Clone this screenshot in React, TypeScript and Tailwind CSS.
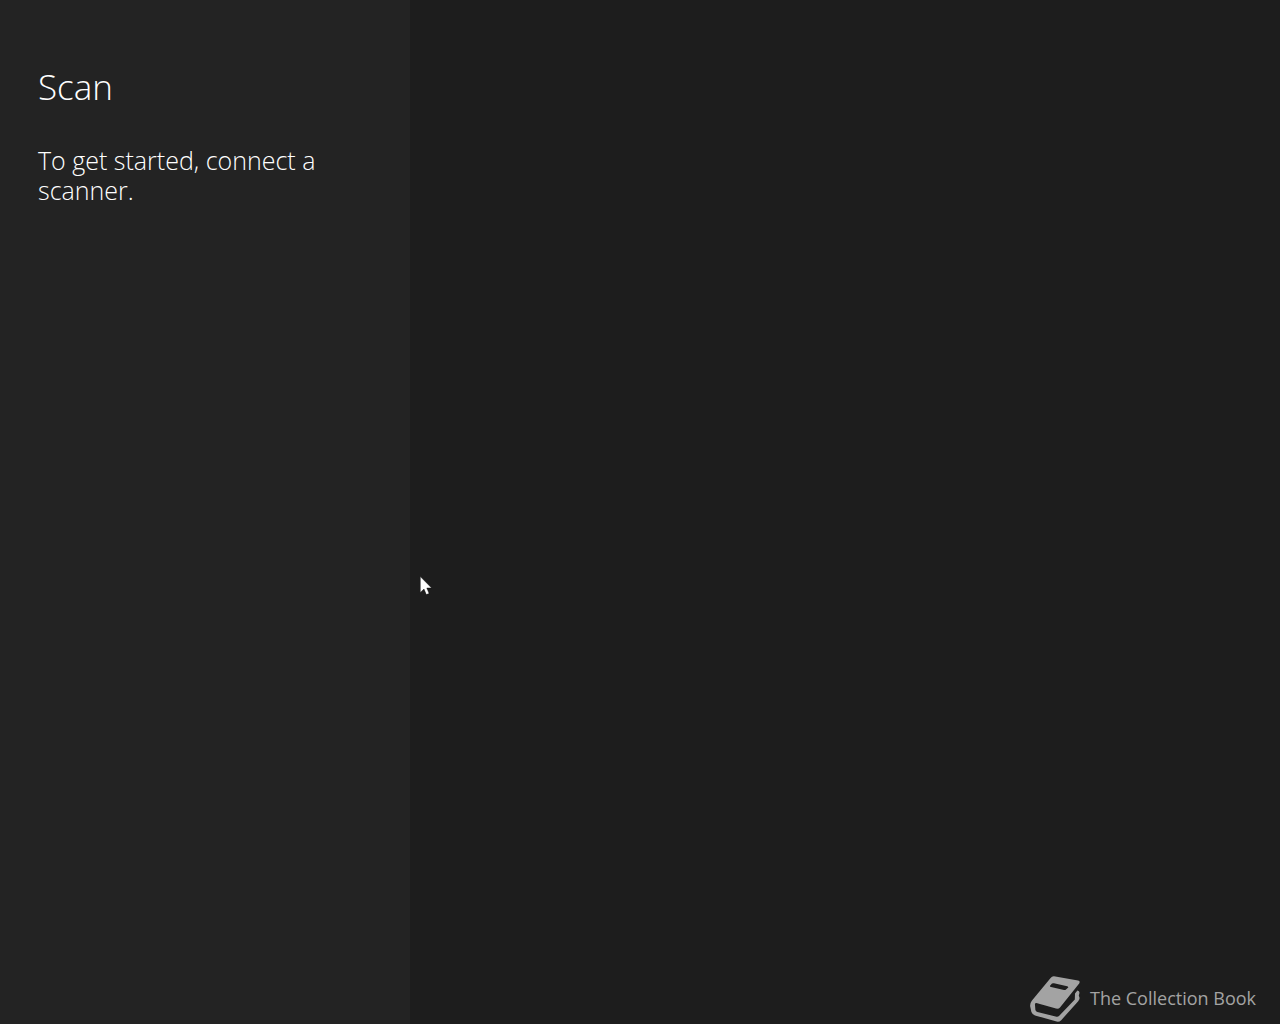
function BookIcon() {
  return (
    <svg viewBox="0 0 70 60" className="h-15 w-[70px]" aria-hidden="true">
      {/* cover, spine and back cover */}
      <path
        fill="#a3a3a3"
        fillRule="evenodd"
        d="M34 12.2 58 16.6Q60.6 17.2 59.2 19.4L40 43.4Q38.6 45.2 36 44.6L16.4 39Q14.6 39 15 41L15.4 46Q15.8 47.6 17.4 48L36.6 52.8Q38 53 39 52L54.8 35.4 55 29.6 57.4 26.4Q59.8 27 59.4 29.2L58.8 31.4 59.6 34Q59.6 35.6 58.2 37.2L41.2 56.2Q39.2 58.2 36.6 57.6L15 51.4Q12.2 50.4 11.4 48L10.2 42.6Q9.8 39.4 11.8 36.8L30.6 14Q32 12 34 12.2ZM32 19.6 30 21.8Q29.8 22.8 31 23.1L44 26Q45.2 26.2 46 25.4L48.2 23.6Q48.6 22.6 47.2 22.2L34 19.3Q32.8 19 32 19.6Z"
      />
    </svg>
  );
}

function Cursor() {
  return (
    <svg
      viewBox="0 0 12 19"
      className="pointer-events-none absolute top-[576px] left-[420px] h-[19px] w-3"
      aria-hidden="true"
    >
      <path
        fill="#ffffff"
        stroke="#000000"
        strokeWidth="0.4"
        d="M0.3 0.6V16.4L4 13.1 6.3 18.6 9.1 17.5 6.8 12H11.6Z"
      />
    </svg>
  );
}

export default function App() {
  return (
    <div className="relative flex min-h-screen bg-[#1d1d1d] font-['Open_Sans','Noto_Sans',sans-serif]">
      <aside className="w-[32%] bg-[#232323] px-[38px] pt-[63px] text-white">
        <h1 className="text-[35px] leading-[48px] font-light">Scan</h1>
        <p className="mt-[34px] text-[25px] leading-[30px] font-light">
          To get started, connect a scanner.
        </p>
      </aside>

      <main className="flex flex-1 items-end justify-end">
        <footer className="flex items-center pr-6 text-[#a3a3a3]">
          <BookIcon />
          <span className="pt-2 text-lg">The Collection Book</span>
        </footer>
      </main>

      <Cursor />
    </div>
  );
}
